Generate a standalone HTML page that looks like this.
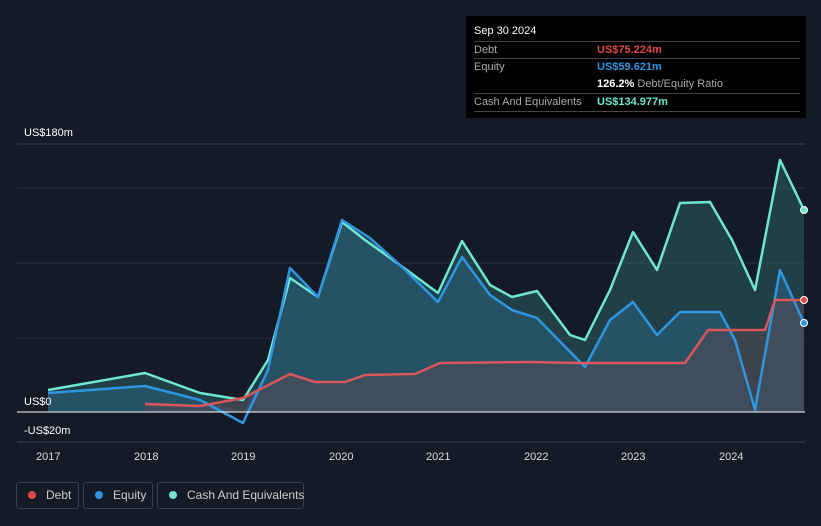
<!DOCTYPE html><html><head><style>
body{margin:0;width:821px;height:526px;background:#151b26;font-family:"Liberation Sans",sans-serif;overflow:hidden;position:relative}
.t{position:absolute;font-size:11px;color:#fff}
.ax{position:absolute;font-size:11px;color:#ddd;top:451px}
.tip{position:absolute;left:466px;top:16px;width:340px;height:102px;background:#000;font-size:11px}
.tip .r{position:absolute;left:8px;right:6px;border-top:1px solid #444;height:18px}
.lg{position:absolute;top:482px;height:27px;border:1px solid #3a404b;border-radius:3px;color:#ccc;font-size:12px;line-height:25px;box-sizing:border-box;white-space:nowrap}
.lg i{display:inline-block;width:8px;height:8px;border-radius:50%;margin:0 10px 0 11px}
</style></head><body>
<svg width="821" height="526" style="position:absolute;left:0;top:0">
<line x1="17" y1="144" x2="805" y2="144" stroke="#3a404b"/>
<line x1="17" y1="188" x2="805" y2="188" stroke="#2a303b"/>
<line x1="17" y1="263" x2="805" y2="263" stroke="#2a303b"/>
<line x1="17" y1="338" x2="805" y2="338" stroke="#2a303b"/>
<line x1="17" y1="442" x2="805" y2="442" stroke="#3a404b"/>
<polygon fill="#2b5c63" fill-opacity="0.55" points="48,390 145,373 200,393 243,400 268,360 290,278 318,297 342,222 365,240 400,265 438,293 462,241 490,285 512,297 537,291 570,335 585,340 610,290 633,232 657,270 680,203 710,202 732,240 755,290 780,160 804,210 804,412 48,412"/>
<polygon fill="#2a6a8a" fill-opacity="0.45" points="48,393 145,386 200,400 243,412 268,370 290,268 318,297 342,220 370,238 400,265 438,302 462,257 490,295 512,310 537,318 585,367 610,320 633,302 657,335 680,312 720,312 735,340 752,412 780,270 804,323 804,412 48,412"/>
<polygon fill="#5a4a55" fill-opacity="0.5" points="145,404 200,406 243,398 290,374 315,382 345,382 365,375 415,374 440,363 530,362 580,363 640,363 685,363 708,330 765,330 775,300 804,300 804,412 145,412"/>
<polyline fill="none" stroke="#6ee7d0" stroke-width="2.5" stroke-linejoin="round" points="48,390 145,373 200,393 243,400 268,360 290,278 318,297 342,222 365,240 400,265 438,293 462,241 490,285 512,297 537,291 570,335 585,340 610,290 633,232 657,270 680,203 710,202 732,240 755,290 780,160 804,210"/>
<polyline fill="none" stroke="#2e96e0" stroke-width="2.5" stroke-linejoin="round" points="48,393 145,386 200,400 243,423 268,370 290,268 318,297 342,220 370,238 400,265 438,302 462,257 490,295 512,310 537,318 585,367 610,320 633,302 657,335 680,312 720,312 735,340 755,410 780,270 804,323"/>
<polyline fill="none" stroke="#d9575a" stroke-width="2.5" stroke-linejoin="round" points="145,404 200,406 243,398 290,374 315,382 345,382 365,375 415,374 440,363 530,362 580,363 640,363 685,363 708,330 765,330 775,300 804,300"/>
<line x1="17" y1="412" x2="805" y2="412" stroke="#fff"/>
<circle cx="804" cy="300" r="3.5" fill="#e04848" stroke="#fff"/>
<circle cx="804" cy="323" r="3.5" fill="#2e96e0" stroke="#fff"/>
<circle cx="804" cy="210" r="3.5" fill="#6ee7d0" stroke="#fff"/>
</svg>
<div class="t" style="left:24px;top:127px">US$180m</div>
<div class="t" style="left:24px;top:396px">US$0</div>
<div class="t" style="left:24px;top:425px">-US$20m</div>
<div class="ax" style="left:36px">2017</div><div class="ax" style="left:134px">2018</div><div class="ax" style="left:231px">2019</div><div class="ax" style="left:329px">2020</div><div class="ax" style="left:426px">2021</div><div class="ax" style="left:524px">2022</div><div class="ax" style="left:621px">2023</div><div class="ax" style="left:719px">2024</div>
<div class="tip">
<div style="position:absolute;left:8px;top:9px;color:#fff">Sep 30 2024</div>
<div class="r" style="top:25px"><span style="position:absolute;top:2px;color:#aaa">Debt</span><span style="position:absolute;left:123px;top:2px;color:#e04848;font-weight:bold">US$75.224m</span></div>
<div class="r" style="top:42px"><span style="position:absolute;top:2px;color:#aaa">Equity</span><span style="position:absolute;left:123px;top:2px;color:#2e96e0;font-weight:bold">US$59.621m</span></div>
<div style="position:absolute;left:131px;top:62px;color:#aaa"><b style="color:#fff">126.2%</b> Debt/Equity Ratio</div>
<div class="r" style="top:77px"><span style="position:absolute;top:2px;color:#aaa">Cash And Equivalents</span><span style="position:absolute;left:123px;top:2px;color:#6ee7d0;font-weight:bold">US$134.977m</span></div>
<div class="r" style="top:95px"></div>
</div>
<div class="lg" style="left:16px;width:63px"><i style="background:#e04848"></i>Debt</div>
<div class="lg" style="left:83px;width:70px"><i style="background:#2e96e0"></i>Equity</div>
<div class="lg" style="left:157px;width:147px"><i style="background:#6ee7d0"></i>Cash And Equivalents</div>
</body></html>
